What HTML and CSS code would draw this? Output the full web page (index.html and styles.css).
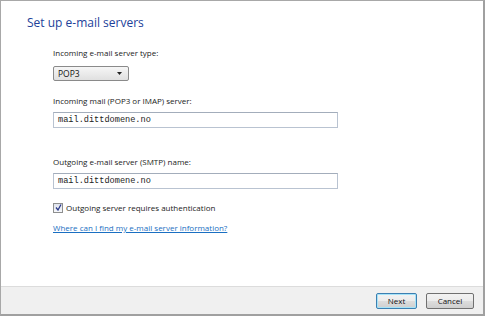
FILE: index.html
```html
<!DOCTYPE html>
<html>
<head>
<meta charset="utf-8">
<link rel="stylesheet" href="styles.css">
</head>
<body>
<div class="window">
  <div class="content">
    <h1 class="title">Set up e-mail servers</h1>
    <div class="form">
      <div class="field field-first">
        <label class="label">Incoming e-mail server type:</label>
        <div class="select"><span>POP3</span><svg class="caret" width="5" height="3" viewBox="0 0 5 3"><path d="M0 0H5L2.5 3Z" fill="#222"/></svg></div>
      </div>
      <div class="field">
        <label class="label">Incoming mail (POP3 or IMAP) server:</label>
        <div class="input">mail.dittdomene.no</div>
      </div>
      <div class="field field-out">
        <label class="label">Outgoing e-mail server (SMTP) name:</label>
        <div class="input">mail.dittdomene.no</div>
      </div>
      <div class="check-row">
        <span class="checkbox"><svg width="7" height="7" viewBox="0 0 7 7"><path d="M1 3.5L3 6L6 0.5" fill="none" stroke="#2b3a8a" stroke-width="1.3"/></svg></span>
        <span class="check-label">Outgoing server requires authentication</span>
      </div>
      <a class="link" href="#">Where can I find my e-mail server information?</a>
    </div>
  </div>
  <div class="footer">
    <button class="btn btn-default">Next</button>
    <button class="btn">Cancel</button>
  </div>
</div>
</body>
</html>
```

FILE: styles.css
```css
* { box-sizing: border-box; }
html, body { margin: 0; padding: 0; background: #fff; }
body { font-family: "Open Sans", "Noto Sans", sans-serif; color: #222; }

.window {
  width: 485px;
  height: 316px;
  border-top: 1px solid #a8a8a8;
  border-left: 1px solid #a8a8a8;
  border-right: 2px solid #a0a0a0;
  border-bottom: 2px solid #a0a0a0;
  display: flex;
  flex-direction: column;
  background: #fff;
}

.content {
  flex: 1;
  padding: 14px 0 0 26px;
}

.title {
  margin: 0;
  font-weight: normal;
  font-size: 12px;
  line-height: 16px;
  color: #22419a;
}

.form {
  padding-left: 26px;
  margin-top: 16px;
  display: flex;
  flex-direction: column;
  align-items: flex-start;
}

.field {
  display: flex;
  flex-direction: column;
  align-items: flex-start;
  margin-bottom: 14px;
}
.field-first .label { margin-bottom: 8px; }
.field-out { margin-top: 14px; margin-bottom: 13px; }

.label {
  font-size: 8px;
  line-height: 11px;
  color: #222;
  margin-bottom: 6px;
}

.select {
  width: 76px;
  height: 15px;
  border: 1px solid #8a8a8a;
  border-radius: 2px;
  background: linear-gradient(#f6f6f6, #e0e0e0);
  display: flex;
  align-items: center;
  justify-content: space-between;
  padding: 0 6px 0 4px;
  font-size: 8.5px;
  color: #111;
}

.input {
  width: 285px;
  height: 16px;
  border: 1px solid #b9c3d1;
  border-top-color: #a3adbb;
  padding: 0 4px;
  font-family: "Liberation Mono", monospace;
  font-size: 8.6px;
  line-height: 14px;
  color: #222;
}

.check-row {
  display: flex;
  align-items: center;
  gap: 3px;
}
.checkbox {
  width: 10px;
  height: 10px;
  border: 1px solid #8e8f8f;
  background: linear-gradient(#dfe3ee, #f6f7fa);
  display: flex;
  align-items: center;
  justify-content: center;
}
.check-label { font-size: 8px; line-height: 11px; }

.link {
  margin-top: 9px;
  font-size: 8px;
  line-height: 11px;
  color: #1a6fc2;
  text-decoration: underline;
}

.footer {
  height: 28px;
  border-top: 1px solid #dcdcdc;
  background: #f0f0f0;
  display: flex;
  justify-content: flex-end;
  align-items: center;
  gap: 9px;
  padding-right: 9px;
}

.btn {
  height: 16px;
  width: 48px;
  padding: 0;
  font-family: "Open Sans", "Noto Sans", sans-serif;
  font-size: 8px;
  color: #111;
  border: 1px solid #707070;
  border-radius: 2px;
  background: linear-gradient(#f2f2f2 0%, #ebebeb 50%, #dddddd 51%, #cfcfcf 100%);
}
.btn-default {
  width: 41px;
  border-color: #3c7fb1;
  box-shadow: inset 0 0 0 1px #a6e3f8;
}
```
